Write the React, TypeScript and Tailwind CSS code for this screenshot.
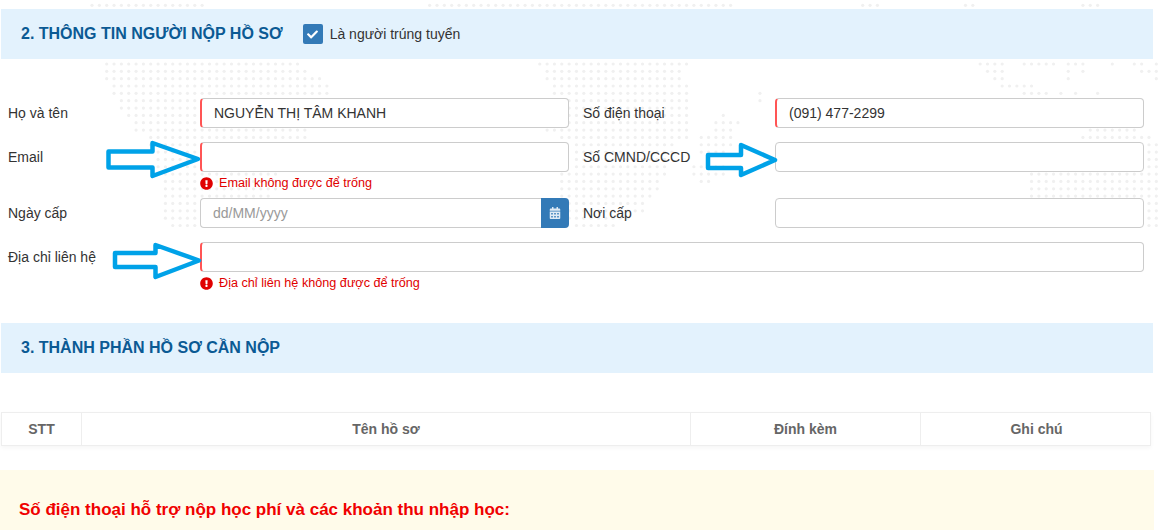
import React from "react";
import { FaCalendarAlt, FaCheck, FaExclamationCircle } from "react-icons/fa";

const STEP = 7.34;
const segments: [number, number, number][] = [
  [-8, 90, 204], [-8, 433, 732], [-8, 863, 880], [-8, 965, 975], [-8, 1080, 1098],
  [0, 106, 298], [0, 541, 684], [0, 980, 1002], [0, 1024, 1054], [0, 1068, 1083], [0, 1112, 1112], [0, 1134, 1142], [0, 1156, 1156],
  [1, 106, 305], [1, 548, 677], [1, 988, 1002], [1, 1068, 1068], [1, 1083, 1083], [1, 1142, 1158],
  [2, 106, 318], [2, 548, 677], [2, 995, 1002], [2, 1068, 1068], [2, 1156, 1156],
  [3, 113, 327], [3, 555, 684], [3, 1002, 1032],
  [4, 113, 327], [4, 555, 684], [4, 762, 762], [4, 1024, 1046], [4, 1061, 1061], [4, 1076, 1076], [4, 1098, 1098],
  [5, 120, 200], [5, 560, 684], [5, 762, 762],
  [6, 120, 200], [6, 560, 684],
  [7, 127, 200], [7, 560, 684], [7, 725, 725],
  [8, 135, 200], [8, 560, 684], [8, 718, 735],
  [9, 135, 306], [9, 548, 684], [9, 718, 732], [9, 1090, 1134],
  [10, 148, 306], [10, 560, 684], [10, 702, 727], [10, 1082, 1148],
  [11, 153, 200], [11, 575, 675], [11, 702, 727], [11, 1148, 1160],
  [12, 156, 200], [12, 575, 672], [12, 702, 720], [12, 1148, 1160],
  [13, 160, 200], [13, 575, 668], [13, 1148, 1160],
  [14, 160, 200], [14, 575, 662], [14, 697, 720], [14, 1148, 1160],
  [15, 164, 272], [15, 565, 661], [15, 697, 720], [15, 1030, 1143], [15, 1148, 1160],
  [16, 164, 272], [16, 565, 658], [16, 702, 712], [16, 1030, 1143], [16, 1148, 1160],
  [17, 164, 272], [17, 565, 655], [17, 1030, 1143], [17, 1148, 1160],
  [18, 164, 271], [18, 565, 649], [18, 1030, 1143], [18, 1148, 1160],
  [19, 164, 200], [19, 570, 645], [19, 1148, 1160],
  [20, 164, 200], [20, 570, 640], [20, 1148, 1160],
  [21, 164, 200], [21, 570, 625], [21, 1148, 1160],
  [22, 170, 200], [22, 575, 610], [22, 1148, 1160],
];

const dots: { x: number; y: number }[] = [];
for (const [row, a, b] of segments) {
  const first = Math.round((a - 106.7) / STEP);
  const last = Math.round((b - 106.7) / STEP);
  for (let k = first; k <= last; k++) dots.push({ x: 106.7 + k * STEP, y: 64 + row * STEP });
}

function WorldDots() {
  return (
    <svg className="absolute left-0 top-0" width="1161" height="260" aria-hidden="true">
      {dots.map((d, i) => (
        <circle key={i} cx={d.x} cy={d.y} r="1.6" fill="#f0f0f0" />
      ))}
    </svg>
  );
}

function Arrow({ points }: { points: string }) {
  return (
    <svg className="pointer-events-none absolute left-0 top-0" width="1161" height="300" aria-hidden="true">
      <polygon points={points} fill="none" stroke="#00a2e8" strokeWidth="4.5" strokeLinejoin="round" />
    </svg>
  );
}

function Label({ children }: { children: React.ReactNode }) {
  return <label className="text-[14px] leading-[20px] text-[#333]">{children}</label>;
}

function Field({ value = "", required = false }: { value?: string; required?: boolean }) {
  return (
    <input
      readOnly
      value={value}
      className={
        required
          ? "h-[30px] w-full rounded-[4px] border border-l-2 border-[#ccc] border-l-[#f55] bg-white pl-[12px] text-[14px] text-[#333] outline-none"
          : "h-[30px] w-full rounded-[4px] border border-[#ccc] bg-white pl-[12px] text-[14px] text-[#333] outline-none"
      }
    />
  );
}

function FieldError({ children }: { children: React.ReactNode }) {
  return (
    <div className="flex h-[26px] items-start gap-[6px] pt-1 text-[12.65px] leading-[14px] text-[#e00000]">
      <FaExclamationCircle className="mt-[0.5px] shrink-0 text-[13px] text-[#e00000]" />
      <span>{children}</span>
    </div>
  );
}

export default function App() {
  return (
    <div className="relative h-[530px] w-[1161px] overflow-hidden bg-white font-['Liberation_Sans',Arial,sans-serif]">
      <WorldDots />
      <div className="relative pt-[9px]">
        <div className="ml-px flex h-[50px] w-[1152px] items-center bg-[#e3f2fd] pl-5">
          <h2 className="text-[16px] font-bold leading-[20px] text-[#0b5a94]">2. THÔNG TIN NGƯỜI NỘP HỒ SƠ</h2>
          <span className="ml-5 flex h-5 w-5 items-center justify-center rounded-[2px] bg-[#337ab7]">
            <FaCheck className="text-[11px] text-white" />
          </span>
          <span className="ml-[7px] text-[14px] leading-[20px] text-[#333]">Là người trúng tuyển</span>
        </div>

        <div className="mt-[39px] grid grid-cols-[192px_369px_206px_369px] items-start pl-2">
          <div className="flex h-[30px] items-center"><Label>Họ và tên</Label></div>
          <Field value="NGUYỄN THỊ TÂM KHANH" required />
          <div className="flex h-[30px] items-center pl-[14px]"><Label>Số điện thoại</Label></div>
          <Field value="(091) 477-2299" required />

          <div className="mt-[14px] flex h-[30px] items-center"><Label>Email</Label></div>
          <div className="mt-[14px]">
            <Field required />
            <FieldError>Email không được để trống</FieldError>
          </div>
          <div className="mt-[14px] flex h-[30px] items-center pl-[14px]"><Label>Số CMND/CCCD</Label></div>
          <div className="mt-[14px]"><Field /></div>

          <div className="flex h-[30px] items-center"><Label>Ngày cấp</Label></div>
          <div className="flex h-[30px]">
            <input
              readOnly
              placeholder="dd/MM/yyyy"
              className="h-[30px] min-w-0 flex-1 rounded-l-[4px] border border-r-0 border-[#ccc] bg-white pl-[12px] text-[14px] text-[#333] outline-none placeholder:text-[#999]"
            />
            <span className="flex h-[30px] w-[28px] items-center justify-center rounded-r-[4px] bg-[#337ab7]">
              <FaCalendarAlt className="text-[12px] text-[#dfeaf5]" />
            </span>
          </div>
          <div className="flex h-[30px] items-center pl-[14px]"><Label>Nơi cấp</Label></div>
          <Field />

          <div className="mt-[14px] flex h-[30px] items-center"><Label>Địa chỉ liên hệ</Label></div>
          <div className="col-span-3 mt-[14px]">
            <Field required />
            <FieldError>Địa chỉ liên hệ không được để trống</FieldError>
          </div>
        </div>

        <div className="ml-px mt-[25px] flex h-[50px] w-[1152px] items-center bg-[#e3f2fd] pl-5">
          <h2 className="text-[16px] font-bold leading-[20px] text-[#0b5a94]">3. THÀNH PHẦN HỒ SƠ CẦN NỘP</h2>
        </div>

        <div className="ml-px mt-[39px] grid h-[34px] w-[1150px] grid-cols-[80px_609px_230px_231px] border border-[#eee] text-center text-[14px] font-bold leading-[32px] text-[#666] shadow-[0_2px_4px_rgba(0,0,0,0.04)]">
          <div className="border-r border-[#eee]">STT</div>
          <div className="border-r border-[#eee]">Tên hồ sơ</div>
          <div className="border-r border-[#eee]">Đính kèm</div>
          <div>Ghi chú</div>
        </div>

        <div className="mt-[24px] flex h-[60px] w-[1154px] items-start bg-[#fffbea] pl-[19px] pt-[30px]">
          <p className="text-[17px] font-bold leading-[20px] text-[#f00000]">Số điện thoại hỗ trợ nộp học phí và các khoản thu nhập học:</p>
        </div>
      </div>

      <Arrow points="108.5,151.5 152.5,151.5 152.5,143 198,159 152.5,176 152.5,167.5 108.5,167.5" />
      <Arrow points="708,155 741,155 741,145 775,160 741,175 741,168 708,168" />
      <Arrow points="115,253 155.5,253 155.5,245 199,260.5 155.5,277 155.5,267 115,267" />
    </div>
  );
}
